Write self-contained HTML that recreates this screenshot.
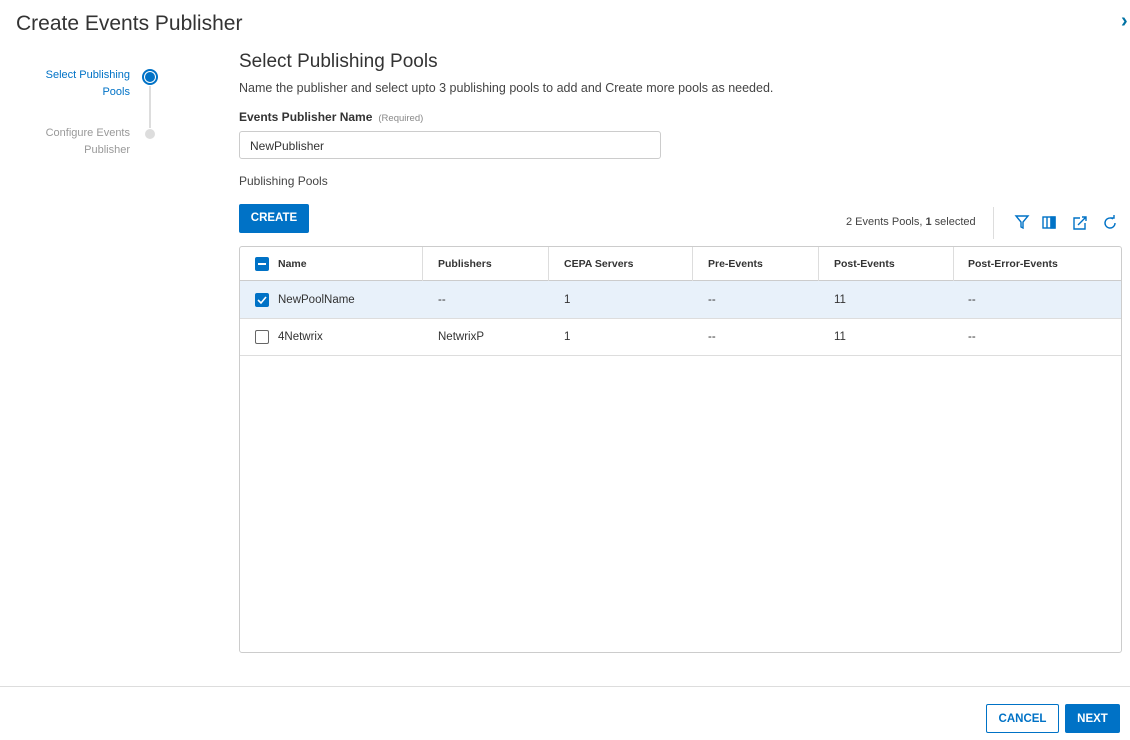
<!DOCTYPE html>
<html><head><style>
*{margin:0;padding:0;box-sizing:border-box}
body{width:1130px;height:740px;background:#fff;font-family:"Liberation Sans",sans-serif;color:#333;position:relative;overflow:hidden}
.a{position:absolute}
.title{left:16px;top:12px;font-size:21px;color:#333;font-weight:300}
.close{left:1121px;top:10px;color:#0072a3;font-size:20px;font-weight:bold}
.step{font-size:11px;text-align:right;line-height:17px;width:120px}
.sec{left:239px;top:51px;font-size:19px;color:#333}
.desc{left:239px;top:81px;font-size:12.5px;color:#444}
.lbl{left:239px;top:110px;font-size:12px;font-weight:bold;color:#333}
.lbl span{font-weight:normal;font-size:9.5px;color:#888;margin-left:6px}
.inp{left:239px;top:131px;width:422px;height:28px;border:1px solid #ccc;border-radius:3px;font-size:12px;padding:7px 10px}
.pp{left:239px;top:174px;font-size:12px;color:#444}
.create{left:239px;top:204px;width:70px;height:29px;background:#0072c6;color:#fff;font-size:11.5px;font-weight:bold;text-align:center;line-height:29px;border-radius:2px}
.cnt{left:846px;top:216px;font-size:11px;color:#444}
.table{left:239px;top:246px;width:883px;height:407px;border:1px solid #ccc;border-radius:3px}
.row{position:absolute;left:0;width:881px;font-size:11.5px}
.hdr{top:0;height:34px;border-bottom:1px solid #ccc;font-weight:bold;font-size:10.5px;color:#333}
.r1{top:34px;height:38px;background:#e8f1fa;border-bottom:1px solid #ddd}
.r2{top:72px;height:37px;border-bottom:1px solid #ddd}
.c{position:absolute;top:0;height:100%;display:flex;align-items:center}
.sep{position:absolute;top:0;height:34px;border-left:1px solid #ddd}
.cb{position:absolute;left:15px;width:14px;height:14px;border-radius:2px}
.btn{top:704px;height:29px;font-size:11.5px;font-weight:bold;text-align:center;border-radius:2px;display:flex;align-items:center;justify-content:center}
</style></head><body>
<div class="a title">Create Events Publisher</div>
<div class="a close">›</div>
<div class="a step" style="left:10px;top:67px;color:#0072c6">Select Publishing<br>Pools</div>
<div class="a step" style="left:10px;top:125px;color:#999">Configure Events<br>Publisher</div>
<div class="a" style="left:142px;top:69px;width:16px;height:16px;border-radius:50%;border:2px solid #0072c6;background:#fff"></div>
<div class="a" style="left:145px;top:72px;width:10px;height:10px;border-radius:50%;background:#0072c6"></div>
<div class="a" style="left:149px;top:86px;width:2px;height:42px;background:#ddd"></div>
<div class="a" style="left:145px;top:129px;width:10px;height:10px;border-radius:50%;background:#ddd"></div>
<div class="a sec">Select Publishing Pools</div>
<div class="a desc">Name the publisher and select upto 3 publishing pools to add and Create more pools as needed.</div>
<div class="a lbl">Events Publisher Name<span>(Required)</span></div>
<div class="a inp">NewPublisher</div>
<div class="a pp">Publishing Pools</div>
<div class="a create">CREATE</div>
<div class="a cnt">2 Events Pools, <b>1</b> selected</div>
<div class="a" style="left:993px;top:207px;width:1px;height:32px;background:#ddd"></div>
<svg class="a" style="left:1010px;top:212px" width="110" height="22" fill="none" stroke="#0072c6" stroke-width="1.4">
<path d="M6 4h12l-5 6v6l-2-1v-5z"/>
<rect x="33" y="5" width="12" height="11"/><path d="M37 5v11M41 5v11" /><rect x="41" y="5" width="4" height="11" fill="#0072c6"/>
<path d="M70 6h-6v11h11v-6M68 13l8-8M72 5h4v4"/>
<path d="M103 7a5 5 0 1 0 2 4M100 6h4v-3"/>
</svg>
<div class="a table">
<div class="row hdr">
<div class="cb" style="top:10px;background:#0072c6"><div style="position:absolute;left:3px;top:6px;width:8px;height:2px;background:#fff"></div></div>
<div class="c" style="left:38px">Name</div>
<div class="sep" style="left:182px"></div><div class="c" style="left:198px">Publishers</div>
<div class="sep" style="left:308px"></div><div class="c" style="left:324px">CEPA Servers</div>
<div class="sep" style="left:452px"></div><div class="c" style="left:468px">Pre-Events</div>
<div class="sep" style="left:578px"></div><div class="c" style="left:594px">Post-Events</div>
<div class="sep" style="left:713px"></div><div class="c" style="left:728px">Post-Error-Events</div>
</div>
<div class="row r1">
<div class="cb" style="top:12px;background:#0072c6"><svg width="14" height="14" style="position:absolute"><path d="M3 7l3 3 5-6" stroke="#fff" stroke-width="1.6" fill="none"/></svg></div>
<div class="c" style="left:38px">NewPoolName</div><div class="c" style="left:198px">--</div><div class="c" style="left:324px">1</div><div class="c" style="left:468px">--</div><div class="c" style="left:594px">11</div><div class="c" style="left:728px">--</div>
</div>
<div class="row r2">
<div class="cb" style="top:11px;border:1px solid #666;background:#fff"></div>
<div class="c" style="left:38px">4Netwrix</div><div class="c" style="left:198px">NetwrixP</div><div class="c" style="left:324px">1</div><div class="c" style="left:468px">--</div><div class="c" style="left:594px">11</div><div class="c" style="left:728px">--</div>
</div>
</div>
<div class="a" style="left:0;top:686px;width:1130px;height:1px;background:#ddd"></div>
<div class="a btn" style="left:986px;width:73px;border:1px solid #0072c6;color:#0072c6">CANCEL</div>
<div class="a btn" style="left:1065px;width:55px;background:#0072c6;color:#fff">NEXT</div>
</body></html>
